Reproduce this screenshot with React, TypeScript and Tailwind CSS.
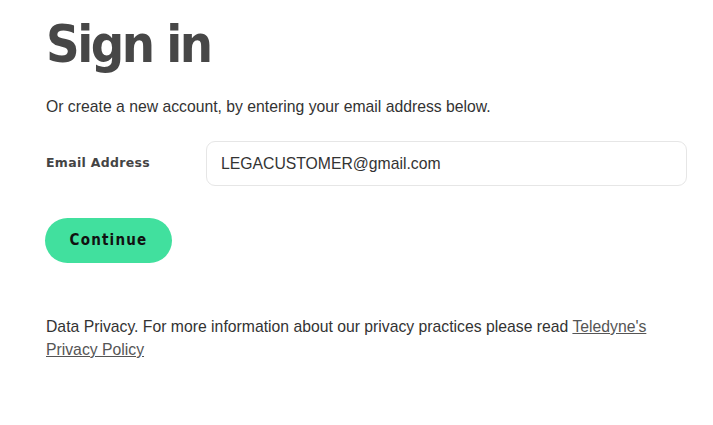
import React from "react";

export default function App() {
  return (
    <div className="min-h-screen bg-white pl-[46px] pr-[26px] pt-[12px] font-['Liberation_Sans',Arial,sans-serif] text-[#333]">
      <h1 className="font-['DejaVu_Sans_Condensed','DejaVu_Sans',sans-serif] text-[52px] font-bold leading-[64px] tracking-[-2.5px] text-[#474747]">
        Sign in
      </h1>
      <p className="mt-[21px] text-[15.75px] leading-[20px] text-[#333]">
        Or create a new account, by entering your email address below.
      </p>
      <div className="mt-[24px] flex items-center">
        <label className="w-[160px] font-['DejaVu_Sans',sans-serif] text-[12.5px] font-bold tracking-[0.3px] text-[#444]">
          Email Address
        </label>
        <input
          type="email"
          defaultValue="LEGACUSTOMER@gmail.com"
          className="h-[45px] flex-1 rounded-[9px] border border-[#e6e6e6] bg-white px-[14px] text-[15.75px] text-[#333] outline-none"
        />
      </div>
      <button className="mt-[32px] -ml-px h-[45px] w-[127px] rounded-full bg-[#41e09e] font-['DejaVu_Sans_Condensed','DejaVu_Sans',sans-serif] text-[15px] font-bold tracking-[1.2px] text-[#111]">
        Continue
      </button>
      <p className="mt-[52px] max-w-[610px] text-[15.75px] leading-[23px] text-[#333]">
        Data Privacy. For more information about our privacy practices please read{" "}
        <a href="#" className="text-[#555] underline">
          Teledyne's Privacy Policy
        </a>
      </p>
    </div>
  );
}
